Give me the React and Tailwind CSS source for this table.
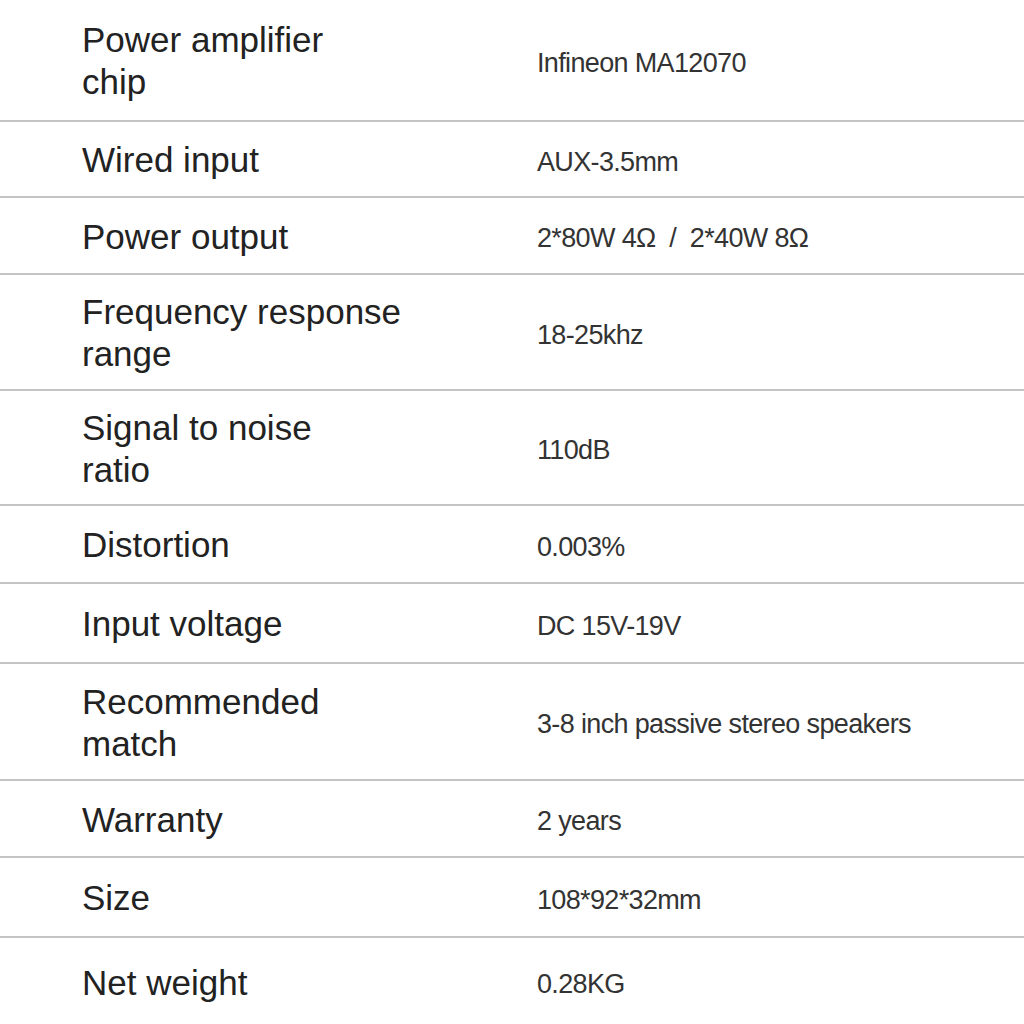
import React from "react";

const rows = [
  { label: ["Power amplifier", "chip"], value: "Infineon MA12070", h: "h-[122px]" },
  { label: ["Wired input"], value: "AUX-3.5mm", h: "h-[76px]" },
  { label: ["Power output"], value: "2*80W 4Ω  /  2*40W 8Ω", h: "h-[77px]" },
  { label: ["Frequency response", "range"], value: "18-25khz", h: "h-[116px]" },
  { label: ["Signal to noise", "ratio"], value: "110dB", h: "h-[115px]" },
  { label: ["Distortion"], value: "0.003%", h: "h-[78px]" },
  { label: ["Input voltage"], value: "DC 15V-19V", h: "h-[80px]" },
  { label: ["Recommended", "match"], value: "3-8 inch passive stereo speakers", h: "h-[117px]" },
  { label: ["Warranty"], value: "2 years", h: "h-[77px]" },
  { label: ["Size"], value: "108*92*32mm", h: "h-[80px]" },
  { label: ["Net weight"], value: "0.28KG", h: "h-[87px]", last: true },
];

export default function App() {
  return (
    <div
      className="w-[1024px] h-[1024px] bg-white overflow-hidden text-[#222]"
      style={{ fontFamily: '"Liberation Sans", Arial, sans-serif' }}
    >
      {rows.map((r, i) => (
        <div
          key={i}
          className={`${r.h} flex items-center ${r.last ? "" : "border-b-2 border-[#c4c4c4]"}`}
        >
          <div className="w-[537px] pl-[82px] pt-[2px] text-[35px] leading-[42px] tracking-[0px]">
            {r.label.map((l, j) => (
              <div key={j}>{l}</div>
            ))}
          </div>
          <div className="pt-[5px] text-[27px] leading-[32px] tracking-[-0.65px] text-[#333] whitespace-pre">
            {r.value}
          </div>
        </div>
      ))}
    </div>
  );
}
